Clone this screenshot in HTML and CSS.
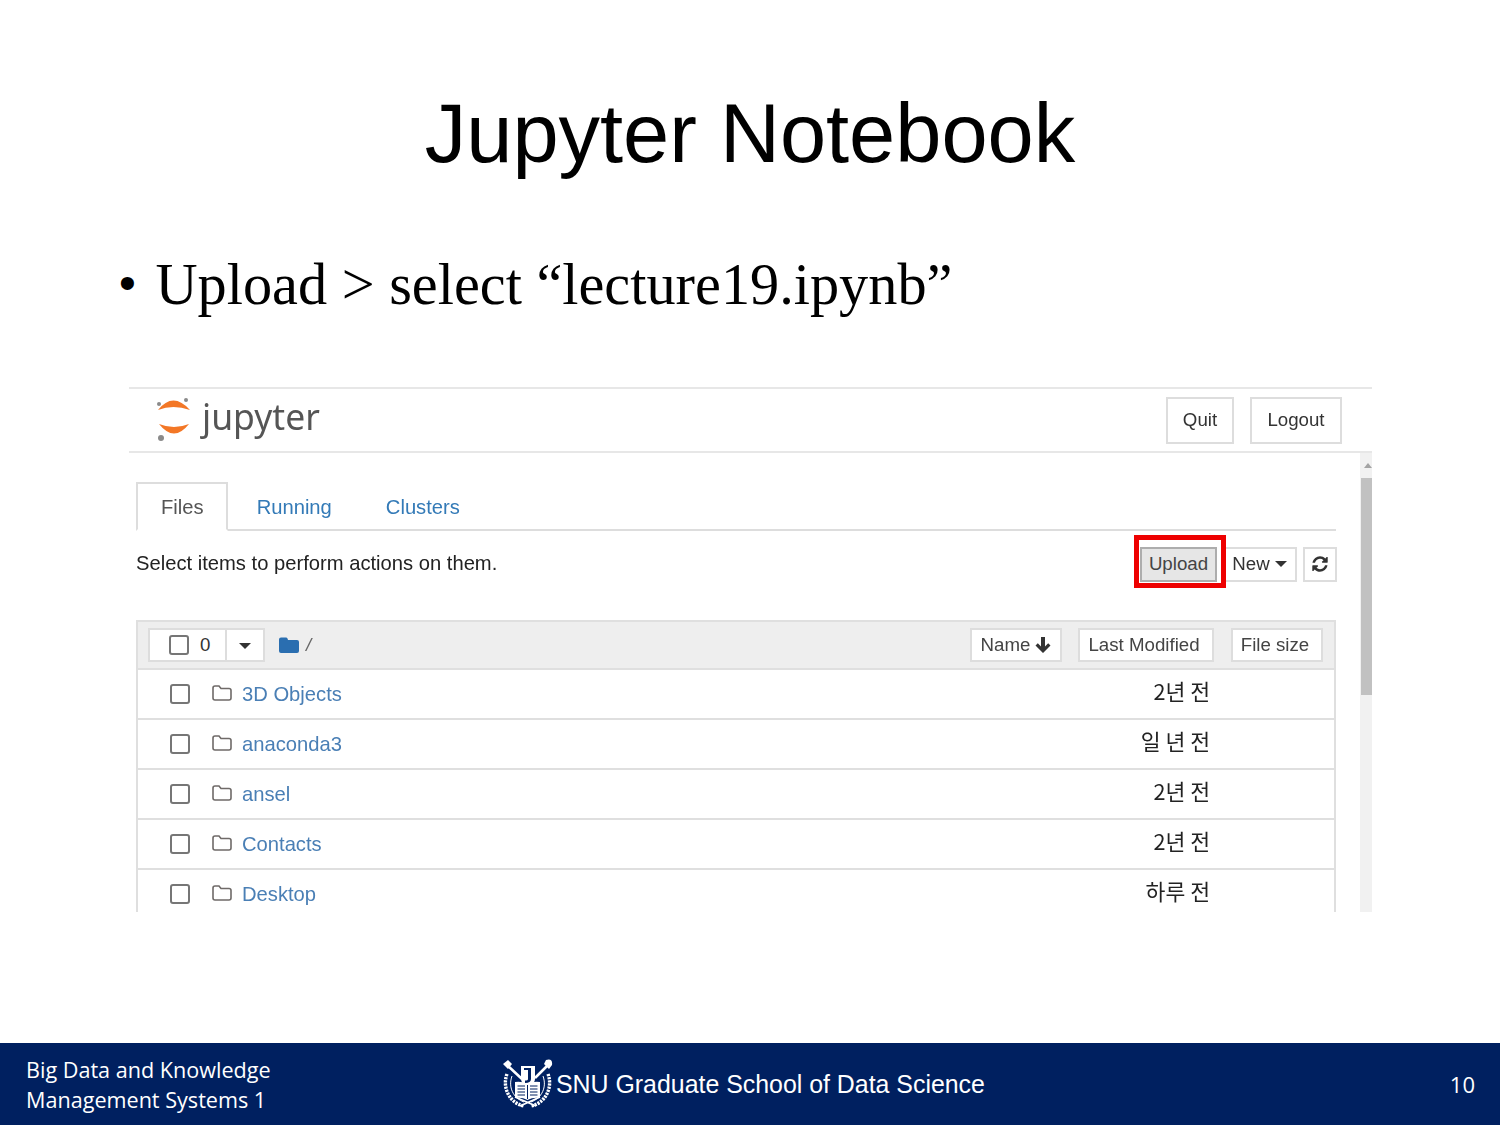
FILE: index.html
```html
<!DOCTYPE html>
<html lang="en">
<head>
<meta charset="utf-8">
<title>Jupyter Notebook</title>
<link rel="stylesheet" href="styles.css">
</head>
<body>
<div class="slide">
  <main class="content">
    <h1 class="title">Jupyter Notebook</h1>
    <ul class="bullets">
      <li class="bullet"><span class="dot">•</span><span>Upload &gt; select “lecture19.ipynb”</span></li>
    </ul>
    <section class="shot">
      <header class="jp-header">
        <div class="brand">
          <svg class="jp-logo" viewBox="0 0 40 48" aria-hidden="true">
            <path class="arc" d="M4 15Q19-4 36 15Q19 9 4 15Z"/>
            <path class="arc" d="M5 29Q20 48 35 29Q20 35 5 29Z"/>
            <circle class="sat" cx="32" cy="5" r="2"/>
            <circle class="sat" cx="5" cy="9" r="2"/>
            <circle class="sat" cx="7" cy="43" r="3"/>
          </svg>
          <span class="wordmark">jupyter</span>
        </div>
        <div class="header-btns">
          <button class="btn head-btn quit">Quit</button>
          <button class="btn head-btn logout">Logout</button>
        </div>
      </header>
      <div class="jp-main">
        <div class="jp-page">
          <nav class="tabs">
            <a class="tab active">Files</a>
            <a class="tab">Running</a>
            <a class="tab">Clusters</a>
          </nav>
          <div class="actions">
            <span class="hint">Select items to perform actions on them.</span>
            <div class="action-btns">
              <button class="btn upload">Upload<span class="highlight"></span></button>
              <button class="btn new">New <i class="caret"></i></button>
              <button class="btn refresh" aria-label="Refresh">
                <svg class="refresh-icon" viewBox="0 0 1792 1792" aria-hidden="true"><path transform="translate(128 0)" d="M1511 1056q0 5-1 7-64 268-268 434.5t-478 166.5q-146 0-282.5-55t-243.5-157l-129 129q-19 19-45 19t-45-19-19-45v-448q0-26 19-45t45-19h448q26 0 45 19t19 45-19 45l-137 137q71 66 161 102t187 36q134 0 250-65t186-179q11-17 53-117 8-23 30-23h192q13 0 22.5 9.5t9.5 22.5zm25-800v448q0 26-19 45t-45 19h-448q-26 0-45-19t-19-45 19-45l138-138q-148-137-349-137-134 0-250 65t-186 179q-11 17-53 117-8 23-30 23h-199q-13 0-22.5-9.5t-9.5-22.5v-7q65-268 270-434.5t480-166.5q146 0 284 55.5t245 156.5l130-129q19-19 45-19t45 19 19 45z"/></svg>
              </button>
            </div>
          </div>
          <div class="list">
            <div class="list-head">
              <div class="select-group">
                <span class="sg-main"><i class="check"></i><span class="count">0</span></span>
                <span class="sg-drop"><i class="caret"></i></span>
              </div>
              <svg class="folder-solid" viewBox="0 0 20 16" aria-hidden="true"><path d="M0 2.500Q0 .5 2 .5H7Q8 .5 8.500 1.500L9 3H18Q20 3 20 5V14Q20 16 18 16H2Q0 16 0 14Z"/></svg>
              <span class="crumb">/</span>
              <div class="sort-btns">
                <button class="sort name">Name
                  <svg class="down" viewBox="0 0 16 16" aria-hidden="true"><path d="M8 16 .5 8.500 2.800 6.200 6 9.400V0H10V9.400L13.200 6.200 15.500 8.500Z"/></svg>
                </button>
                <button class="sort modified">Last Modified</button>
                <button class="sort size">File size</button>
              </div>
            </div>
            <div class="row"><i class="check row-check"></i><svg class="folder" viewBox="0 0 20 16" aria-hidden="true"><path d="M1 3Q1 1 3 1H7L9 3.500H17Q19 3.500 19 5.500V13Q19 15 17 15H3Q1 15 1 13Z"/></svg><a class="name-link">3D Objects</a><span class="time">2년 전</span></div>
            <div class="row"><i class="check row-check"></i><svg class="folder" viewBox="0 0 20 16" aria-hidden="true"><path d="M1 3Q1 1 3 1H7L9 3.500H17Q19 3.500 19 5.500V13Q19 15 17 15H3Q1 15 1 13Z"/></svg><a class="name-link">anaconda3</a><span class="time">일 년 전</span></div>
            <div class="row"><i class="check row-check"></i><svg class="folder" viewBox="0 0 20 16" aria-hidden="true"><path d="M1 3Q1 1 3 1H7L9 3.500H17Q19 3.500 19 5.500V13Q19 15 17 15H3Q1 15 1 13Z"/></svg><a class="name-link">ansel</a><span class="time">2년 전</span></div>
            <div class="row"><i class="check row-check"></i><svg class="folder" viewBox="0 0 20 16" aria-hidden="true"><path d="M1 3Q1 1 3 1H7L9 3.500H17Q19 3.500 19 5.500V13Q19 15 17 15H3Q1 15 1 13Z"/></svg><a class="name-link">Contacts</a><span class="time">2년 전</span></div>
            <div class="row"><i class="check row-check"></i><svg class="folder" viewBox="0 0 20 16" aria-hidden="true"><path d="M1 3Q1 1 3 1H7L9 3.500H17Q19 3.500 19 5.500V13Q19 15 17 15H3Q1 15 1 13Z"/></svg><a class="name-link">Desktop</a><span class="time">하루 전</span></div>
          </div>
        </div>
        <div class="scrollbar"><i class="sb-arrow"></i><div class="sb-thumb"></div></div>
      </div>
    </section>
  </main>
  <footer class="footer">
    <div class="course">Big Data and Knowledge<br>Management Systems 1</div>
    <div class="school">
      <svg class="seal" viewBox="0 0 50 50" aria-hidden="true">
        <g fill="none" stroke="#fff" stroke-linecap="butt">
          <path stroke-width="3.400" stroke-dasharray="2.200 1" d="M4 15C-1 28 6 44 21 47"/>
          <path stroke-width="3.400" stroke-dasharray="2.200 1" d="M45 15C50 28 43 44 28 47"/>
          <path stroke-width="1" d="M9 17C5 28 10 39 21 43M40 17C44 28 39 39 28 43"/>
          <path stroke-width="1.800" d="M12 38 33 47M37 38 17 47"/>
          <path stroke-width="2.600" d="M5 7 19 20M45 6 32 19"/>
        </g>
        <path fill="#fff" d="M0 5 5 1 9 5 5 10ZM43 1Q50-1 49 6L46 10 41 5Z"/>
        <path fill="#fff" d="M18 7H32V20Q32 25 25 28Q18 25 18 20Z"/>
        <path fill="#002060" d="M21 9H28V20Q28 24 22 24V21.500Q25 21.500 25 20V11H21Z"/>
        <path fill="#fff" d="M12 23Q19 22 24.500 25Q30 22 37 23V39Q30 38 24.500 41Q19 38 12 39Z"/>
        <path fill="none" stroke="#002060" stroke-width="1" d="M24.500 26V40M14.500 27H22M14.500 30H22M14.500 33H22M14.500 36H22M27 27H34.500M27 30H34.500M27 33H34.500M27 36H34.500"/>
      </svg>
      <span class="school-name">SNU Graduate School of Data Science</span>
    </div>
    <div class="page-no">10</div>
  </footer>
</div>
</body>
</html>
```

FILE: styles.css
```css
* { box-sizing: border-box; }
html, body { margin: 0; padding: 0; background: #fff; }
.slide {
  width: 1500px; height: 1125px; overflow: hidden;
  display: flex; flex-direction: column;
  font-family: "Liberation Sans", Arial, sans-serif;
  color: #000;
}
.content { flex: 1; min-height: 0; }
.title {
  margin: 0; padding-top: 86px;
  font-size: 83px; line-height: 96px; font-weight: 400;
  text-align: center;
}
.bullets { list-style: none; margin: 0; padding: 70px 0 0 119px; }
.bullet {
  display: flex;
  font-family: "Liberation Serif", "Times New Roman", serif;
  font-size: 58.300px; line-height: 66px;
}
.dot { width: 36.500px; font-family: "Liberation Sans", Arial, sans-serif; font-size: 48px; line-height: 62px; }

/* embedded screenshot */
.shot {
  margin: 69px 0 0 129px; width: 1243px; height: 525px; overflow: hidden;
  border-top: 2px solid #e7e7e7;
  font-size: 20.200px; color: #333;
  filter: blur(.4px);
}
.jp-header {
  height: 64px; border-bottom: 2px solid #e7e7e7;
  display: flex; align-items: center; justify-content: space-between;
  padding: 0 30px 0 26px;
}
.brand { display: flex; align-items: center; gap: 8px; margin-bottom: 2px; }
.jp-logo { width: 40px; height: 48px; display: block; margin-left: -1px; }
.arc { fill: #f37726; }
.sat { fill: #8a8a8a; }
.wordmark {
  font-family: "Noto Sans", "Open Sans", sans-serif;
  font-size: 35.500px; line-height: 40px; color: #555;
  margin-bottom: 6px;
}
.header-btns { display: flex; gap: 16px; }
.btn {
  font: inherit; font-size: 18.700px; color: #333; background: #fff;
  border: 2px solid #ddd; padding: 0; margin: 0;
  display: inline-flex; align-items: center; justify-content: center;
}
.head-btn { height: 47px; }
.quit { width: 68px; }
.logout { width: 92px; }
.jp-main { display: flex; height: 459px; }
.jp-page { width: 1231px; padding: 29px 24px 0 7px; }
.tabs {
  display: flex; height: 49px; border-bottom: 2px solid #ddd;
  width: 1200px;
}
.tab { color: #337ab7; padding: 0 25px; line-height: 50px; margin-right: 4px; }
.tab.active {
  color: #555; background: #fff; height: 49px;
  border: 2px solid #ddd; border-bottom: 2px solid #fff;
  padding: 0 22px 0 23px; line-height: 46px;
}
.actions {
  display: flex; justify-content: space-between; align-items: center;
  width: 1201px; height: 35px; margin-top: 16px;
}
.hint { color: #222; margin-top: -2px; }
.action-btns { display: flex; height: 35px; }
.action-btns .btn { padding-bottom: 2px; }
.upload {
  position: relative; z-index: 1; width: 77px; margin-right: 5px;
  background: #e6e6e6; border-color: #adadad; color: #444;
}
.highlight {
  position: absolute; left: -8px; right: -11px; top: -14px; bottom: -8px;
  border: 5px solid #ee0000;
}
.new { width: 75px; margin-right: 6px; gap: 5px; }
.refresh { width: 34px; }
.refresh-icon { width: 18px; height: 18px; fill: #333; display: block; }
.caret {
  display: inline-block; width: 0; height: 0;
  border-left: 6px solid transparent; border-right: 6px solid transparent;
  border-top: 6px solid #333;
}
.list {
  width: 1200px; margin-top: 38px;
  border-left: 2px solid #dfdfdf; border-right: 2px solid #dfdfdf;
}
.list-head {
  height: 50px; background: #eee; padding: 0 11px 1px 10px;
  border-top: 2px solid #dfdfdf; border-bottom: 2px solid #dfdfdf;
  display: flex; align-items: center;
}
.select-group {
  display: flex; height: 34px; width: 117px; background: #fff; border: 2px solid #ddd;
}
.sg-main { width: 77px; display: flex; align-items: center; padding-left: 19px; gap: 11px; border-right: 2px solid #ddd; }
.count { font-size: 18.700px; }
.sg-drop { flex: 1; display: flex; align-items: center; justify-content: center; padding-top: 3px; }
.check {
  display: block; width: 20px; height: 20px; flex: none;
  border: 2px solid #767676; border-radius: 3px; background: #fff;
}
.folder-solid { width: 20px; height: 16px; fill: #2a6eb0; margin-left: 14px; display: block; }
.crumb { margin-left: 7px; color: #666; font-style: italic; font-size: 18.700px; }
.sort-btns { margin-left: auto; display: flex; gap: 16px; }
.sort {
  font: inherit; font-size: 18.700px; color: #444; background: #fff; border: 2px solid #ddd;
  height: 34px; padding: 0; display: flex; align-items: center; justify-content: center;
}
.name { width: 92px; gap: 5px; }
.modified { width: 136px; padding-right: 4px; }
.size { width: 92px; margin-left: 1px; padding-right: 4px; }
.down { width: 16px; height: 16px; fill: #333; display: block; }
.row {
  height: 50px; border-bottom: 2px solid #dfdfdf; background: #fff;
  display: flex; align-items: center; padding: 0 124px 0 32px;
}
.row-check { margin-top: -1px; }
.folder { width: 20px; height: 16px; fill: #fff; stroke: #6f6a68; stroke-width: 1.600; margin-left: 22px; margin-top: -2px; display: block; }
.name-link { color: #4a7fb5; margin-left: 10px; }
.time { margin-left: auto; font-family: "Noto Sans CJK KR", sans-serif; color: #222; font-size: 21.600px; margin-top: -7px; }
.scrollbar { width: 12px; background: #f1f1f1; position: relative; padding-top: 25px; }
.sb-arrow {
  position: absolute; top: 10px; left: 4px; width: 0; height: 0;
  border-left: 4px solid transparent; border-right: 4px solid transparent;
  border-bottom: 5px solid #a3a3a3;
}
.sb-thumb { height: 217px; margin-left: 1px; background: #c1c1c1; }

/* footer */
.footer {
  height: 82px; background: #002060; color: #fff;
  display: flex; align-items: center; padding: 0 25px 0 26px;
  flex: none;
}
.course { width: 477px; padding-top: 2px; font-family: "Open Sans", sans-serif; font-size: 21.600px; line-height: 30px; }
.school { display: flex; align-items: center; gap: 3px; }
.seal { width: 50px; height: 50px; display: block; }
.school-name { font-size: 24.900px; }
.page-no { margin-left: auto; font-family: "Open Sans", sans-serif; font-size: 22px; }
```
